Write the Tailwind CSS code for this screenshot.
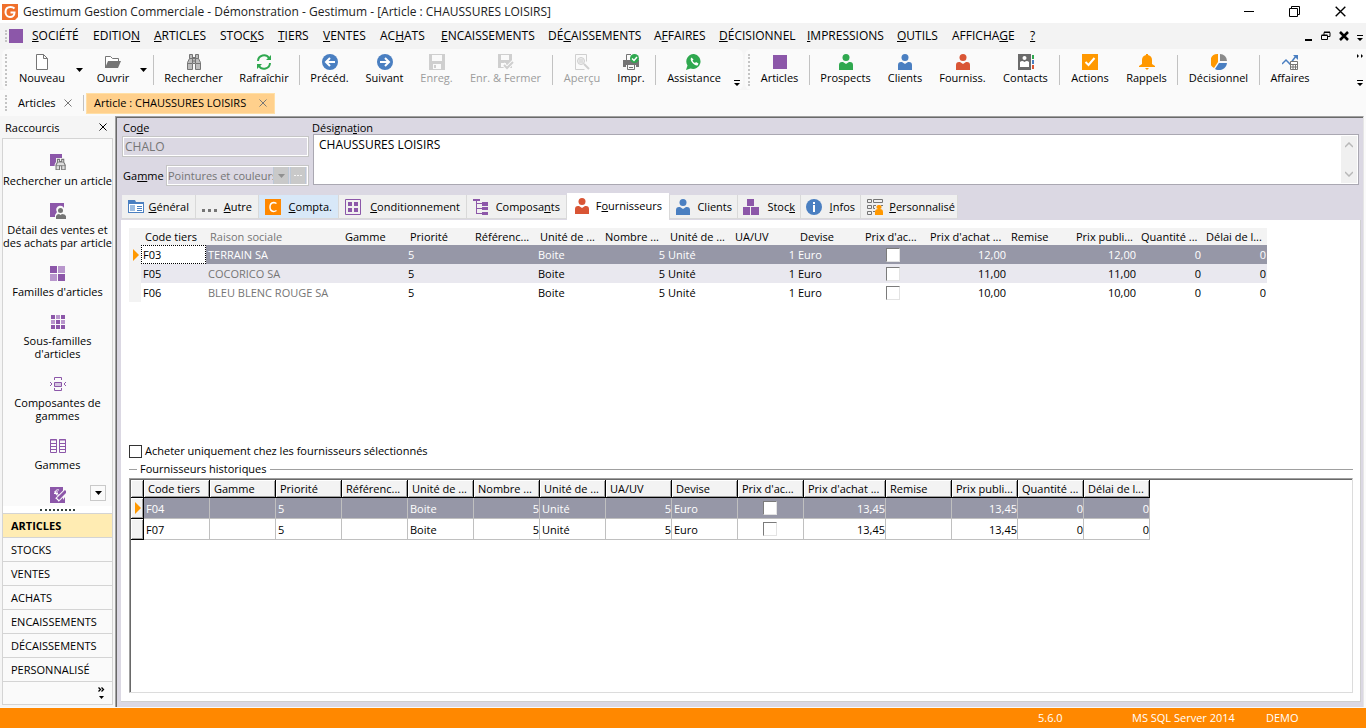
<!DOCTYPE html>
<html lang="fr">
<head>
    <meta charset="UTF-8">
    <meta name="viewport" content="width=device-width, initial-scale=1.0">
    <title>Gestimum Gestion Commerciale</title>
    <script src="https://cdn.jsdelivr.net/npm/@tailwindcss/browser@4"></script>
</head>
<body class="flex flex-col h-screen overflow-hidden bg-[#fafafa] text-black text-[11px] leading-4 font-['Segoe_UI','Open_Sans',sans-serif] whitespace-nowrap">

    <!-- Icônes partagées -->
    <svg class="hidden">
        <symbol id="person" viewBox="0 0 16 16"><circle cx="8" cy="3.5" r="3.5"/><path d="M1 16v-5q0-3 3-3h1l3 2 3-2h1q3 0 3 3v5z"/></symbol>
        <symbol id="binoculars" viewBox="0 0 16 16"><path fill="#bdbdbd" stroke="#757575" d="M3.500.5h3v3h3v-3h3v4l2 4v7h-5v-6h-3v6h-5v-7l2-4z"/><path stroke="#757575" fill="none" d="M3.500 4.500h9M1 9.500h5M10 9.500h5M6.500 7h3M6.500 3v6M9.500 3v6"/></symbol>
        <symbol id="cross" viewBox="0 0 8 8"><path fill="none" stroke="currentColor" d="M.5.5l7 7M7.500.5l-7 7"/></symbol>
        <symbol id="more" viewBox="0 0 6 6"><path fill="currentColor" d="M0 0h6v1H0zM0 3h6L3 6z"/></symbol>
        <symbol id="down" viewBox="0 0 7 4"><path fill="currentColor" d="M0 0h7L3.500 4z"/></symbol>
    </svg>

    <!-- Barre de titre -->
    <header class="flex items-center h-[23px] shrink-0 bg-white pl-[2px] pr-5 text-[12px]">
        <svg class="w-4 h-4" viewBox="0 0 16 16"><path d="M0 0h16v13l-3 3H0z" fill="#f0702c"/><path d="M12.500 4.500Q11 3 8.500 3C5.500 3 3.500 5 3.500 8s2 5 4.500 5 4.500-2 4.500-4.500H8.500" fill="none" stroke="#fff" stroke-width="2"/></svg>
        <h1 class="ml-[5px] text-[#222]">Gestimum Gestion Commerciale - Démonstration - Gestimum - [Article : CHAUSSURES LOISIRS]</h1>
        <div class="ml-auto flex gap-[35px]">
            <button aria-label="Réduire"><svg class="w-[10px] h-[11px]" viewBox="0 0 10 11"><path d="M0 5.500h10" stroke="#000"/></svg></button>
            <button aria-label="Restaurer"><svg class="w-[11px] h-[11px]" viewBox="0 0 11 11"><path d="M.5 2.500h8v8h-8zM2.500 2.500v-2h8v8h-2" fill="none" stroke="#000"/></svg></button>
            <button aria-label="Fermer"><svg class="w-[11px] h-[11px]"><use href="#cross"/></svg></button>
        </div>
    </header>

    <!-- Menu principal -->
    <nav class="flex items-center h-[26px] shrink-0 bg-[#f3f3f3] pl-[5px] pr-[3px] text-[12px]">
        <div class="w-1 h-3 border-l-2 border-dotted border-[#c4c4c4]"></div>
        <div class="w-[14px] h-[14px] bg-[#8c57a9] mr-[9px]"></div>
        <a href="#" class="w-[61px]"><u>S</u>OCIÉTÉ</a>
        <a href="#" class="w-[61px]">EDITIO<u>N</u></a>
        <a href="#" class="w-[66px]"><u>A</u>RTICLES</a>
        <a href="#" class="w-[58px]">STOC<u>K</u>S</a>
        <a href="#" class="w-[45px]"><u>T</u>IERS</a>
        <a href="#" class="w-[57px]"><u>V</u>ENTES</a>
        <a href="#" class="w-[61px]">AC<u>H</u>ATS</a>
        <a href="#" class="w-[107px]"><u>E</u>NCAISSEMENTS</a>
        <a href="#" class="w-[106px]">DÉ<u>C</u>AISSEMENTS</a>
        <a href="#" class="w-[65px]">A<u>F</u>FAIRES</a>
        <a href="#" class="w-[88px]"><u>D</u>ÉCISIONNEL</a>
        <a href="#" class="w-[90px]"><u>I</u>MPRESSIONS</a>
        <a href="#" class="w-[55px]"><u>O</u>UTILS</a>
        <a href="#" class="w-[78px]">AFFICHA<u>G</u>E</a>
        <a href="#"><u>?</u></a>
        <div class="ml-auto flex gap-2">
            <button aria-label="Réduire la fenêtre"><svg class="w-2 h-[10px]" viewBox="0 0 8 10"><path d="M0 8h7v2H0z"/></svg></button>
            <button aria-label="Restaurer la fenêtre"><svg class="w-[10px] h-[10px]" viewBox="0 0 10 10"><path d="M.5 4.500h6v4h-6zM3 4V1.500h6v4H7M.5 4h6M3 1h6" fill="none" stroke="#000"/></svg></button>
            <button aria-label="Fermer la fenêtre"><svg class="w-[10px] h-[10px]" viewBox="0 0 10 10"><path d="M1 1l8 8M9 1L1 9" stroke="#000" stroke-width="2.500"/></svg></button>
            <button aria-label="Options" class="self-end"><svg class="w-[6px] h-[6px]"><use href="#more"/></svg></button>
        </div>
    </nav>

    <!-- Barres d'outils -->
    <div class="flex h-[41px] shrink-0 bg-[#f5f5f5] pl-[2px]">
        <div class="flex items-center w-[741px] pl-[3px] mr-[2px] bg-[#fafafa] rounded-md">
            <div class="w-[5px] h-8 border-l-2 border-dotted border-[#c4c4c4]"></div>
            <button class="flex flex-col items-center w-[64px]">
                <svg class="w-4 h-4" viewBox="0 0 16 16"><path d="M2.500.5h7l4 4v11h-11zM9.500.5v4h4" fill="#fff" stroke="#757575"/></svg>Nouveau
            </button>
            <button aria-label="Nouveau, options" class="flex justify-center w-[14px] pr-[3px]"><svg class="w-[7px] h-1"><use href="#down"/></svg></button>
            <button class="flex flex-col items-center w-[50px]">
                <svg class="w-4 h-4" viewBox="0 0 16 16"><path d="M.5 14V2.500h5l2 2h6V7" fill="#fff" stroke="#757575"/><path d="M3 7h13l-3 7H0z" fill="#757575"/></svg>Ouvrir
            </button>
            <button aria-label="Ouvrir, options" class="flex justify-center w-[14px] pr-[3px]"><svg class="w-[7px] h-1"><use href="#down"/></svg></button>
            <div class="w-px h-[30px] bg-[#c2c2c2] ml-px mr-[2px]"></div>
            <button class="flex flex-col items-center w-[75px]"><svg class="w-4 h-4"><use href="#binoculars"/></svg>Rechercher</button>
            <button class="flex flex-col items-center w-[66px]">
                <svg class="w-4 h-4" viewBox="0 0 16 16"><g fill="none" stroke="#2fa84f" stroke-width="2"><path d="M2 7a6 6 0 0 1 11-3M14 9a6 6 0 0 1-11 3"/></g><path fill="#2fa84f" d="M15 1v5h-5zM1 15v-5h5z"/></svg>Rafraîchir
            </button>
            <div class="w-px h-[30px] bg-[#c2c2c2] ml-[2px] mr-[2px]"></div>
            <button class="flex flex-col items-center w-[55px]">
                <svg class="w-4 h-4" viewBox="0 0 16 16"><circle cx="8" cy="8" r="8" fill="#4a7fc1"/><path d="M13 8H5M8 4L4 8l4 4" fill="none" stroke="#fff" stroke-width="2"/></svg>Précéd.
            </button>
            <button class="flex flex-col items-center w-[55px]">
                <svg class="w-4 h-4" viewBox="0 0 16 16"><circle cx="8" cy="8" r="8" fill="#4a7fc1"/><path d="M3 8h8M8 4l4 4-4 4" fill="none" stroke="#fff" stroke-width="2"/></svg>Suivant
            </button>
            <button disabled class="flex flex-col items-center w-[49px] text-[#9c9c9c]">
                <svg class="w-4 h-4" viewBox="0 0 16 16"><path d="M0 0h16v16H0z" fill="#cfcfcf"/><path d="M3 1h10v6H3zM4 10h8v5H4z" fill="#fafafa"/><path d="M5 11h2v3H5z" fill="#cfcfcf"/></svg>Enreg.
            </button>
            <button disabled class="flex flex-col items-center w-[89px] text-[#9c9c9c]">
                <svg class="w-4 h-4" viewBox="0 0 16 16"><path d="M0 0h14v14H0z" fill="#cfcfcf"/><path d="M3 1h8v5H3zM3 9h5v4H3z" fill="#fafafa"/><path d="M5 10l4 4 7-7" fill="none" stroke="#fafafa" stroke-width="4"/><path d="M6 11l3 3 6-6" fill="none" stroke="#cfcfcf" stroke-width="2"/></svg>Enr. &amp; Fermer
            </button>
            <div class="w-px h-[30px] bg-[#c2c2c2] ml-[2px] mr-[2px]"></div>
            <button disabled class="flex flex-col items-center w-[54px] text-[#9c9c9c]">
                <svg class="w-4 h-4" viewBox="0 0 16 16"><g fill="none" stroke="#cfcfcf"><path d="M1.500.5h11v7M1.500.5v15h9"/><circle cx="7" cy="7" r="3.500" fill="#eee"/><path d="M5 6h4M5 8h4"/><path d="M10 10l5 5" stroke-width="2"/></g></svg>Aperçu
            </button>
            <button class="flex flex-col items-center w-[44px]">
                <svg class="w-4 h-4" viewBox="0 0 16 16"><path d="M0 6h16v7h-3v-2H3v2H0z" fill="#757575"/><path d="M3.500 6V.5H8M4.500 11v4.500h7V11M6 13.500h4" fill="none" stroke="#757575"/><circle cx="11.500" cy="4.500" r="4.500" fill="#2fa84f"/><path d="M9 4.500l2 2 3-3.500" fill="none" stroke="#fff" stroke-width="1.500"/></svg>Impr.
            </button>
            <div class="w-px h-[30px] bg-[#c2c2c2] ml-[2px] mr-[2px]"></div>
            <button class="flex flex-col items-center w-[72px]">
                <svg class="w-4 h-4" viewBox="0 0 16 16"><path d="M8 0a7.500 7.500 0 1 1-3.500 14.500L0 16l1.500-4.500A7.500 7.500 0 0 1 8 0z" fill="#2fa84f"/><path d="M5.500 3.500c-3 2 3 9 6 8l1-2-2.500-1.500-1 1q-2-1-2.500-2.500l1-1z" fill="#fff"/></svg>Assistance
            </button>
            <button aria-label="Options" class="self-end mb-1 ml-1"><svg class="w-[6px] h-[6px]"><use href="#more"/></svg></button>
        </div>
        <div class="flex items-center grow pl-[3px] pr-[3px] bg-[#fafafa] rounded-l-md">
            <div class="w-1 h-8 border-l-2 border-dotted border-[#c4c4c4]"></div>
            <button class="flex flex-col items-center w-[55px]"><svg class="w-4 h-4" viewBox="0 0 16 16"><path fill="#8c57a9" d="M1 1h14v14H1z"/></svg>Articles</button>
            <div class="w-px h-[30px] bg-[#c2c2c2] ml-[2px] mr-[2px]"></div>
            <button class="flex flex-col items-center w-[67px]"><svg class="w-4 h-4 fill-[#2fa84f]"><use href="#person"/></svg>Prospects</button>
            <button class="flex flex-col items-center w-[52px]"><svg class="w-4 h-4 fill-[#4a7fc1]"><use href="#person"/></svg>Clients</button>
            <button class="flex flex-col items-center w-[63px]"><svg class="w-4 h-4 fill-[#d95535]"><use href="#person"/></svg>Fourniss.</button>
            <button class="flex flex-col items-center w-[63px]">
                <svg class="w-4 h-4" viewBox="0 0 16 16"><path fill="#6b6b6b" d="M0 0h13v16H0z"/><circle cx="6.500" cy="4" r="2" fill="#fff"/><path d="M2 13V8q2-2 4.500 0 2.500-2 4.500 0v5z" fill="#fff"/><path fill="#2fa84f" d="M14 1h2v4h-2z"/><path fill="#4a7fc1" d="M14 6h2v4h-2z"/><path fill="#d95535" d="M14 11h2v4h-2z"/></svg>Contacts
            </button>
            <div class="w-px h-[30px] bg-[#c2c2c2] ml-[2px] mr-[2px]"></div>
            <button class="flex flex-col items-center w-[56px]"><svg class="w-4 h-4" viewBox="0 0 16 16"><path fill="#ff9800" d="M0 0h16v16H0z"/><path d="M3.500 8l3 3 6-7" fill="none" stroke="#fff" stroke-width="2"/></svg>Actions</button>
            <button class="flex flex-col items-center w-[57px]"><svg class="w-4 h-4" viewBox="0 0 16 16"><path fill="#ff9800" d="M7 0h2v1q4 1 4 5v4l3 2v1H0v-1l3-2V6q0-4 4-5zM6 14h4l-2 2z"/></svg>Rappels</button>
            <div class="w-px h-[30px] bg-[#c2c2c2] ml-[2px] mr-[2px]"></div>
            <button class="flex flex-col items-center w-[77px]"><svg class="w-4 h-4" viewBox="0 0 16 16"><path fill="#ff9800" d="M7 0v8l-4 6A7.500 7.500 0 0 1 7 0z"/><path fill="#8a8a8a" d="M9 0a7 7 0 0 1 7 7H9z"/><path fill="#4a7fc1" d="M8 9h8a8 8 0 0 1-12 6z"/></svg>Décisionnel</button>
            <div class="w-px h-[30px] bg-[#c2c2c2] ml-[2px] mr-[2px]"></div>
            <button class="flex flex-col items-center w-[56px]"><svg class="w-4 h-4" viewBox="0 0 16 16"><path d="M0 10l4-4 4 4 6-8" fill="none" stroke="#4a7fc1" stroke-width="1.500"/><path d="M11 1h5v5z" fill="#4a7fc1"/><path d="M8.500 7.500h7v8h-7z" fill="#fff" stroke="#757575"/><path d="M9 10.500h6M9 13h6M11 10v5M13.500 10v5" stroke="#757575"/></svg>Affaires</button>
            <div class="ml-auto h-8 flex flex-col justify-between items-end">
                <svg class="w-[6px] h-[5px]" viewBox="0 0 6 5"><path d="M0 0l2 2-2 2zM4 0l2 2-2 2z"/></svg>
                <button aria-label="Options"><svg class="w-[6px] h-[6px]"><use href="#more"/></svg></button>
            </div>
        </div>
    </div>

    <!-- Onglets des documents ouverts -->
    <div class="flex items-center h-[26px] shrink-0 pl-[5px]">
        <div class="w-[13px] h-4 border-l-2 border-dotted border-[#c4c4c4]"></div>
        <a href="#" class="w-[46px]">Articles</a>
        <button aria-label="Fermer Articles" class="text-[#777]"><svg class="w-2 h-2"><use href="#cross"/></svg></button>
        <div class="w-px h-4 bg-[#c2c2c2] ml-[11px] mr-[2px]"></div>
        <div class="flex items-center justify-between w-[189px] h-[21px] px-[7px] bg-[#ffd08c] border border-[#ffdfa6]">
            <a href="#">Article : CHAUSSURES LOISIRS</a>
            <button aria-label="Fermer l'article" class="text-[#777]"><svg class="w-2 h-2"><use href="#cross"/></svg></button>
        </div>
    </div>

    <div class="flex grow min-h-0 pr-[2px]">
        <!-- Raccourcis -->
        <aside class="flex flex-col w-[115px] shrink-0 bg-[#f5f5f5] leading-[13px] pl-[2px] pr-[2px] pb-[2px]">
            <div class="flex items-center justify-between h-[22px] shrink-0 pl-[3px] pr-[6px]">
                <h2>Raccourcis</h2>
                <button aria-label="Fermer les raccourcis"><svg class="w-2 h-2"><use href="#cross"/></svg></button>
            </div>
            <div class="relative flex flex-col gap-4 grow min-h-0 overflow-hidden pt-[15px] bg-[#fafafa] border border-b-0 border-[#d4d4d4] text-center">
                <a href="#" class="flex flex-col items-center gap-1">
                    <svg class="w-4 h-4" viewBox="0 0 16 16"><path fill="#8c57a9" d="M0 0h12v12H0z"/><g transform="translate(5 5) scale(.7)"><path d="M3.500.5h3v3h3v-3h3v4l2 4v7h-5v-6h-3v6h-5v-7l2-4z" fill="#eee" stroke="#fafafa" stroke-width="4"/><path d="M3.500.5h3v3h3v-3h3v4l2 4v7h-5v-6h-3v6h-5v-7l2-4z" fill="#ddd" stroke="#757575" stroke-width="1.500"/><path d="M3.500 4.500h9M1 9.500h5M10 9.500h5" stroke="#757575"/></g></svg>
                    Rechercher un article
                </a>
                <a href="#" class="flex flex-col items-center gap-1">
                    <svg class="w-4 h-4" viewBox="0 0 16 16"><path fill="#8c57a9" d="M0 0h14v14H0z"/><path fill="#fafafa" d="M5 12l2-3a4 4 0 1 1 7-1l2 2v6H5z"/><g fill="#757575"><circle cx="10.500" cy="7.500" r="2.500"/><path d="M6 16v-3q1-2 3-2l1.500 1 1.500-1q3 0 4 2v3z"/></g></svg>
                    <span>Détail des ventes et<br>des achats par article</span>
                </a>
                <a href="#" class="flex flex-col items-center gap-1">
                    <svg class="w-4 h-4" viewBox="0 0 16 16"><path fill="#8c57a9" d="M0 1h7v7H0zM8 9h7v7H8z"/><path fill="#b896cc" d="M8 1h7v7H8zM0 9h7v7H0z"/></svg>
                    Familles d'articles
                </a>
                <a href="#" class="flex flex-col items-center gap-1">
                    <svg class="w-4 h-4" viewBox="0 0 16 16"><path fill="#8c57a9" d="M1 1h4v4H1zM11 1h4v4h-4zM6 6h4v4H6zM1 11h4v4H1zM11 11h4v4h-4zM6 11h4v4H6z"/><path fill="#b896cc" d="M6 1h4v4H6zM1 6h4v4H1zM11 6h4v4h-4z"/></svg>
                    <span>Sous-familles<br>d'articles</span>
                </a>
                <a href="#" class="flex flex-col items-center gap-1">
                    <svg class="w-4 h-4" viewBox="0 0 16 16"><g fill="none" stroke="#8c57a9"><path d="M4.500 4V1.500h7V4M4.500 12v2.500h7V12M0 6l2 2-2 2M16 6l-2 2 2 2"/><path d="M4.500 6.500h7v4h-7z" fill="#d6c6e0"/></g></svg>
                    <span>Composantes de<br>gammes</span>
                </a>
                <a href="#" class="flex flex-col items-center gap-1">
                    <svg class="w-4 h-4" viewBox="0 0 16 16"><path fill="none" stroke="#8c57a9" d="M.5 1.500h6v13h-6zM9.500 1.500h6v13h-6zM0 5.500h7M0 8.500h7M0 11.500h7M9 5.500h7M9 8.500h7M9 11.500h7M0 2h7M9 2h7"/></svg>
                    Gammes
                </a>
                <a href="#" aria-label="Tarifs" class="flex flex-col items-center">
                    <svg class="w-4 h-4" viewBox="0 0 16 16"><path fill="#8c57a9" d="M0 0h13v16H0z"/><path fill="none" stroke="#fff" d="M9 3Q5 2 5.500 6 6 9 9 8M4 5h4M4 6.500h4"/><path stroke="#fafafa" stroke-width="5" d="M7 13l9-9"/><path stroke="#8c57a9" stroke-width="3" d="M8 12l8-8"/><path fill="#8c57a9" d="M11 16l4-6v6zM6 12l2 2-3 1z"/></svg>
                </a>
                <button aria-label="Suite" class="absolute right-[6px] bottom-[5px] flex items-center justify-center w-4 h-4 bg-[#fafafa] border border-[#c9c9c9]"><svg class="w-[7px] h-1"><use href="#down"/></svg></button>
            </div>
            <div class="flex justify-center items-center h-[7px] shrink-0 bg-white border-x border-[#d4d4d4]"><div class="w-[35px] border-t-2 border-dotted border-[#33413f]"></div></div>
            <nav class="flex flex-col shrink-0 bg-[#fafafa] border border-[#d4d4d4] divide-y divide-[#d4d4d4]">
                <a href="#" class="h-6 leading-[23px] pl-2 bg-[#ffecb3] font-bold">ARTICLES</a>
                <a href="#" class="h-6 leading-[23px] pl-2">STOCKS</a>
                <a href="#" class="h-6 leading-[23px] pl-2">VENTES</a>
                <a href="#" class="h-6 leading-[23px] pl-2">ACHATS</a>
                <a href="#" class="h-6 leading-[23px] pl-2">ENCAISSEMENTS</a>
                <a href="#" class="h-6 leading-[23px] pl-2">DÉCAISSEMENTS</a>
                <a href="#" class="h-6 leading-[23px] pl-2">PERSONNALISÉ</a>
                <button aria-label="Configurer" class="flex justify-end items-center h-[22px] pr-[7px]"><svg class="w-[7px] h-[13px]" viewBox="0 0 7 13"><path d="M.5.5l2 2-2 2M3.500.5l2 2-2 2" fill="none" stroke="#000" stroke-width="1.300"/><path d="M1 9h5l-2.500 3z"/></svg></button>
            </nav>
        </aside>

        <!-- Fiche article -->
        <main class="flex flex-col grow min-w-0 bg-[#dbd8e3] border-l border-t border-[#a0a0a0] border-r border-r-[#e6e6e6] shadow-[inset_1px_1px_0_#696969] pt-1 pl-[5px] pr-[2px] pb-[5px]">
            <form class="flex gap-1 pl-px pr-[2px]">
                <div class="w-[187px] shrink-0">
                    <label for="code" class="block leading-[13px] pl-px mb-[2px]">Co<u>d</u>e</label>
                    <input id="code" disabled value="CHALO" class="block w-full h-[21px] px-[2px] text-[12px] bg-[#dbd8e3] text-[#757575] border border-[#c6c6c6] outline outline-white -outline-offset-2">
                    <div class="flex items-center mt-2 h-[21px]">
                        <label for="gamme" class="w-[44px] pl-px">Ga<u>m</u>me</label>
                        <div class="flex grow min-w-0 h-full items-center border border-[#c6c6c6] outline outline-white -outline-offset-2 pr-[2px]">
                            <select id="gamme" disabled class="appearance-none w-[106px] shrink-0 pl-px text-[#757575] overflow-hidden"><option>Pointures et couleurs</option></select>
                            <button type="button" disabled aria-label="Choisir" class="flex items-center justify-center w-4 h-[19px] bg-[#c9c9c9] border border-[#bcc8d6] text-[#909090]"><svg class="w-[7px] h-1"><use href="#down"/></svg></button>
                            <button type="button" disabled aria-label="Parcourir" class="flex items-center justify-center grow h-[19px] ml-px bg-[#c9c9c9] border border-[#bcc8d6]"><svg class="w-2 h-[2px]" viewBox="0 0 8 2"><path fill="#f5f5f5" d="M0 0h2v1H0zM3 0h2v1H3zM6 0h2v1H6z"/></svg></button>
                        </div>
                    </div>
                </div>
                <div class="grow">
                    <label for="designation" class="block leading-[13px] -ml-px">Désigna<u>t</u>ion</label>
                    <div class="flex h-[51px] bg-white border border-[#aaa8b2] p-px">
                        <textarea id="designation" class="grow resize-none outline-none pl-1 pt-px text-[12px] leading-4">CHAUSSURES LOISIRS</textarea>
                        <div class="flex flex-col justify-between items-center w-4 py-[6px] bg-[#f0f0f0]">
                            <svg class="w-2 h-[6px]" viewBox="0 0 8 6"><path d="M0 5l4-4 4 4" fill="none" stroke="#b8b8b8" stroke-width="1.500"/></svg>
                            <svg class="w-2 h-[6px]" viewBox="0 0 8 6"><path d="M0 1l4 4 4-4" fill="none" stroke="#b8b8b8" stroke-width="1.500"/></svg>
                        </div>
                    </div>
                </div>
            </form>

            <div role="tablist" class="flex items-end h-[27px] mt-[7px] pl-px shrink-0">
                <button role="tab" class="flex items-center justify-between w-[74px] h-6 mb-px pt-px px-[6px] bg-[#f0f0f0] border-b border-r border-[#d9d9d9]">
                    <svg class="w-4 h-4 shrink-0" viewBox="0 0 16 16"><path fill="#4a7fc1" d="M0 1h7l1 2h8v11H0z"/><path fill="#fff" d="M1 5h14v8H1z"/><path fill="#9dbde2" d="M2 6h5v6H2z"/><path stroke="#4a7fc1" d="M9 7.500h5M9 9.500h5M9 11.500h5"/></svg>
                    <span><u>G</u>énéral</span>
                </button>
                <button role="tab" class="flex items-center justify-between w-[63px] h-6 mb-px pt-px px-[6px] bg-[#f0f0f0] border-b border-r border-[#d9d9d9]">
                    <svg class="w-4 h-4 shrink-0" viewBox="0 0 16 16"><path fill="#757575" d="M0 10h3v3H0zM6 10h3v3H6zM12 10h3v3h-3z"/></svg>
                    <span><u>A</u>utre</span>
                </button>
                <button role="tab" class="flex items-center justify-between w-[80px] h-6 mb-px pt-px px-[6px] bg-[#d8e8f8] border-b border-r border-[#d9d9d9]">
                    <svg class="w-4 h-4 shrink-0" viewBox="0 0 16 16"><path fill="#ff8800" d="M0 0h16v16H0z"/><path d="M11.500 4.500Q10 3.500 8.500 3.500 5 4 5 8t3.500 4.500q1.500 0 3-1" fill="none" stroke="#fff" stroke-width="1.500"/></svg>
                    <span><u>C</u>ompta.</span>
                </button>
                <button role="tab" class="flex items-center justify-between w-[128px] h-6 mb-px pt-px px-[6px] bg-[#f0f0f0] border-b border-r border-[#d9d9d9]">
                    <svg class="w-4 h-4 shrink-0" viewBox="0 0 16 16"><path fill="none" stroke="#8c57a9" d="M.5.5h15v15H.5z"/><path fill="#8c57a9" d="M3 3h4v4H3zM9 3h4v4H9zM3 9h4v4H3zM9 9h4v4H9z"/></svg>
                    <span><u>C</u>onditionnement</span>
                </button>
                <button role="tab" class="flex items-center justify-between w-[100px] h-6 mb-px pt-px px-[6px] bg-[#f0f0f0] border-b border-r border-[#d9d9d9]">
                    <svg class="w-4 h-4 shrink-0" viewBox="0 0 16 16"><path fill="#8c57a9" d="M0 0h7v2H4v2h5V3h6v4H9V5H4v4h5V8h6v3H9v-1H4v4h5v-1h6v3H9v-1H3V2H0z"/></svg>
                    <span>Composa<u>n</u>ts</span>
                </button>
                <button role="tab" aria-selected="true" class="flex items-center justify-between w-[102px] h-[27px] pb-[2px] px-[7px] bg-white">
                    <svg class="w-4 h-4 shrink-0 fill-[#d95535]"><use href="#person"/></svg>
                    <span>F<u>o</u>urnisseurs</span>
                </button>
                <button role="tab" class="flex items-center justify-between w-[69px] h-6 mb-px pt-px px-[5px] bg-[#f0f0f0] border-b border-x border-[#d9d9d9]">
                    <svg class="w-4 h-4 shrink-0 fill-[#4a7fc1]"><use href="#person"/></svg>
                    <span>Clients</span>
                </button>
                <button role="tab" class="flex items-center justify-between w-[63px] h-6 mb-px pt-px px-[5px] bg-[#f0f0f0] border-b border-r border-[#d9d9d9]">
                    <svg class="w-4 h-4 shrink-0" viewBox="0 0 16 16"><path fill="#8c57a9" d="M4 0h7v7H4zM0 8h7v8H0zM8 8h8v8H8z"/></svg>
                    <span>Stoc<u>k</u></span>
                </button>
                <button role="tab" class="flex items-center justify-between w-[60px] h-6 mb-px pt-px px-[5px] bg-[#f0f0f0] border-b border-r border-[#d9d9d9]">
                    <svg class="w-4 h-4 shrink-0" viewBox="0 0 16 16"><circle cx="8" cy="8" r="8" fill="#4a7fc1"/><path fill="#fff" d="M7 3h2v2H7zM7 6h2v7H7z"/></svg>
                    <span><u>I</u>nfos</span>
                </button>
                <button role="tab" class="flex items-center justify-between w-[97px] h-6 mb-px pt-px pl-[6px] pr-[2px] bg-[#f0f0f0] border-b border-r border-[#d9d9d9]">
                    <svg class="w-4 h-4 shrink-0" viewBox="0 0 16 16"><path fill="none" stroke="#757575" d="M.5.5h4v3h-4zM6.500.5h9v3h-9zM.5 6.500h4v3h-4zM9 6.500H6.500v3H8M.5 12.500h4v3h-4zM14 6.500h2M6 12.500h2"/><path fill="#ff9800" d="M12 6a2 2 0 0 1 1 4q3 0 3 3v3H8v-3q0-3 3-3a2 2 0 0 1 1-4z"/></svg>
                    <span><u>P</u>ersonnalisé</span>
                </button>
            </div>

            <section class="flex flex-col grow min-h-0 bg-white pt-2 pl-2 pr-[7px] pb-2 border-r border-b border-[#cfcfcf]">
                <div class="h-[216px] shrink-0 overflow-hidden">
                    <table class="table-fixed w-[1138px] border-separate border-spacing-0">
                        <colgroup id="cols1"></colgroup>
                        <thead><tr id="head1" class="h-[17px] bg-[#f3f3f3]"></tr></thead>
                        <tbody id="body1"></tbody>
                    </table>
                </div>
                <label class="flex items-center gap-[3px] h-[14px] shrink-0 mb-[3px]"><input type="checkbox" class="appearance-none w-[13px] h-[13px] bg-white border border-[#333]">Acheter uniquement chez les fournisseurs sélectionnés</label>
                <fieldset class="flex flex-col grow min-h-0 border-t border-[#a0a0a0]">
                    <legend class="ml-2 px-[3px]">Fournisseurs historiques</legend>
                    <div class="grow mt-px overflow-hidden border-t border-l border-[#a0a0a0] border-r border-b border-r-[#dcdcdc] border-b-[#dcdcdc] shadow-[inset_1px_1px_0_#696969] pt-px pl-px">
                        <table class="table-fixed w-[1019px] border-separate border-spacing-0">
                            <colgroup id="cols2"></colgroup>
                            <thead><tr id="head2" class="h-[18px]"></tr></thead>
                            <tbody id="body2"></tbody>
                        </table>
                    </div>
                </fieldset>
            </section>
        </main>
    </div>

    <!-- Barre d'état -->
    <footer class="flex items-center justify-end h-5 shrink-0 mt-px bg-[#ff8800] text-white">
        <span class="w-[94px]">5.6.0</span>
        <span class="w-[134px]">MS SQL Server 2014</span>
        <span class="w-[100px]">DEMO</span>
    </footer>

    <script>
        const columns = ['Code tiers', 'Raison sociale', 'Gamme', 'Priorité', 'Référenc...', 'Unité de ...', 'Nombre ...', 'Unité de ...', 'UA/UV', 'Devise', "Prix d'ac...", "Prix d'achat ...", 'Remise', 'Prix publi...', 'Quantité ...', 'Délai de l...'];
        const rightCols = ['Nombre ...', 'UA/UV', "Prix d'achat ...", 'Prix publi...', 'Quantité ...', 'Délai de l...'];
        const suppliers = [
            ['F03', 'TERRAIN SA', '', '5', '', 'Boite', '5', 'Unité', '1', 'Euro', null, '12,00', '', '12,00', '0', '0'],
            ['F05', 'COCORICO SA', '', '5', '', 'Boite', '5', 'Unité', '1', 'Euro', null, '11,00', '', '11,00', '0', '0'],
            ['F06', 'BLEU BLENC ROUGE SA', '', '5', '', 'Boite', '5', 'Unité', '1', 'Euro', null, '10,00', '', '10,00', '0', '0'],
        ];
        const history = [
            ['F04', '', '5', '', 'Boite', '5', 'Unité', '5', 'Euro', null, '13,45', '', '13,45', '0', '0'],
            ['F07', '', '5', '', 'Boite', '5', 'Unité', '5', 'Euro', null, '13,45', '', '13,45', '0', '0'],
        ];
        const marker = '<svg class="block ml-1 w-[6px] h-3" viewBox="0 0 6 12"><path fill="#ff9800" d="M0 0l6 6-6 6z"/></svg>';
        const box = '<input type="checkbox" aria-label="Prix d\'achat" class="block mx-auto appearance-none w-[14px] h-[14px] bg-white border border-t-[#7b7b7b] border-l-[#7b7b7b] border-b-[#e3e3e3] border-r-[#e3e3e3]">';
        const width = (names, first, normal, wide) => [first, ...names.map(n => n === 'Raison sociale' ? 135 : n === "Prix d'achat ..." ? wide : normal)].map(w => `<col style="width:${w}px">`).join('');
        const el = id => document.getElementById(id);

        // Fournisseurs de l'article
        el('cols1').innerHTML = width(columns, 12, 65, 81);
        el('head1').innerHTML = '<th></th>' + columns.map(c => `<th class="pt-px pl-1 font-normal text-left ${c === 'Raison sociale' ? 'text-[#757575]' : ''}">${c}</th>`).join('');
        el('body1').innerHTML = suppliers.map((row, r) => {
            const look = r === 0 ? 'bg-[#9697a7] text-white' : r === 1 ? 'bg-[#e9e8ef]' : '';
            return `<tr class="h-[19px] ${look}"><td class="p-0 bg-[#f3f3f3]">${r === 0 ? marker : ''}</td>` + row.map((v, c) => {
                if (v === null) return `<td class="p-0 pr-[2px]">${box}</td>`;
                const align = rightCols.includes(columns[c]) ? 'text-right pr-px' : 'pl-[2px]';
                const extra = r === 0 && c === 0 ? 'bg-white text-black outline-1 outline-dotted outline-black -outline-offset-1' : r > 0 && c === 1 ? 'text-[#757575]' : '';
                return `<td class="py-0 ${align} ${extra}">${v}</td>`;
            }).join('') + '</tr>';
        }).join('');

        // Fournisseurs historiques
        const columns2 = columns.filter(c => c !== 'Raison sociale');
        const raised = 'bg-[#f3f3f3] border-r border-b border-black shadow-[inset_1px_1px_0_#fff,inset_-1px_-1px_0_#a0a0a0]';
        el('cols2').innerHTML = width(columns2, 13, 66, 82);
        el('head2').innerHTML = `<th class="${raised}"></th>` + columns2.map(c => `<th class="p-0 pl-1 font-normal text-left ${raised}">${c}</th>`).join('');
        el('body2').innerHTML = history.map((row, r) => `<tr class="h-[21px] ${r === 0 ? 'bg-[#9697a7] text-white' : ''}"><td class="p-0 ${raised}">${r === 0 ? marker : ''}</td>` + row.map((v, c) => {
            const line = 'border-r border-b border-[#c0c0c0]';
            if (v === null) return `<td class="p-0 pr-px ${line}">${box}</td>`;
            return `<td class="pt-px ${line} ${rightCols.includes(columns2[c]) ? 'text-right' : 'pl-[2px]'}">${v}</td>`;
        }).join('') + '</tr>').join('');
    </script>
</body>
</html>
